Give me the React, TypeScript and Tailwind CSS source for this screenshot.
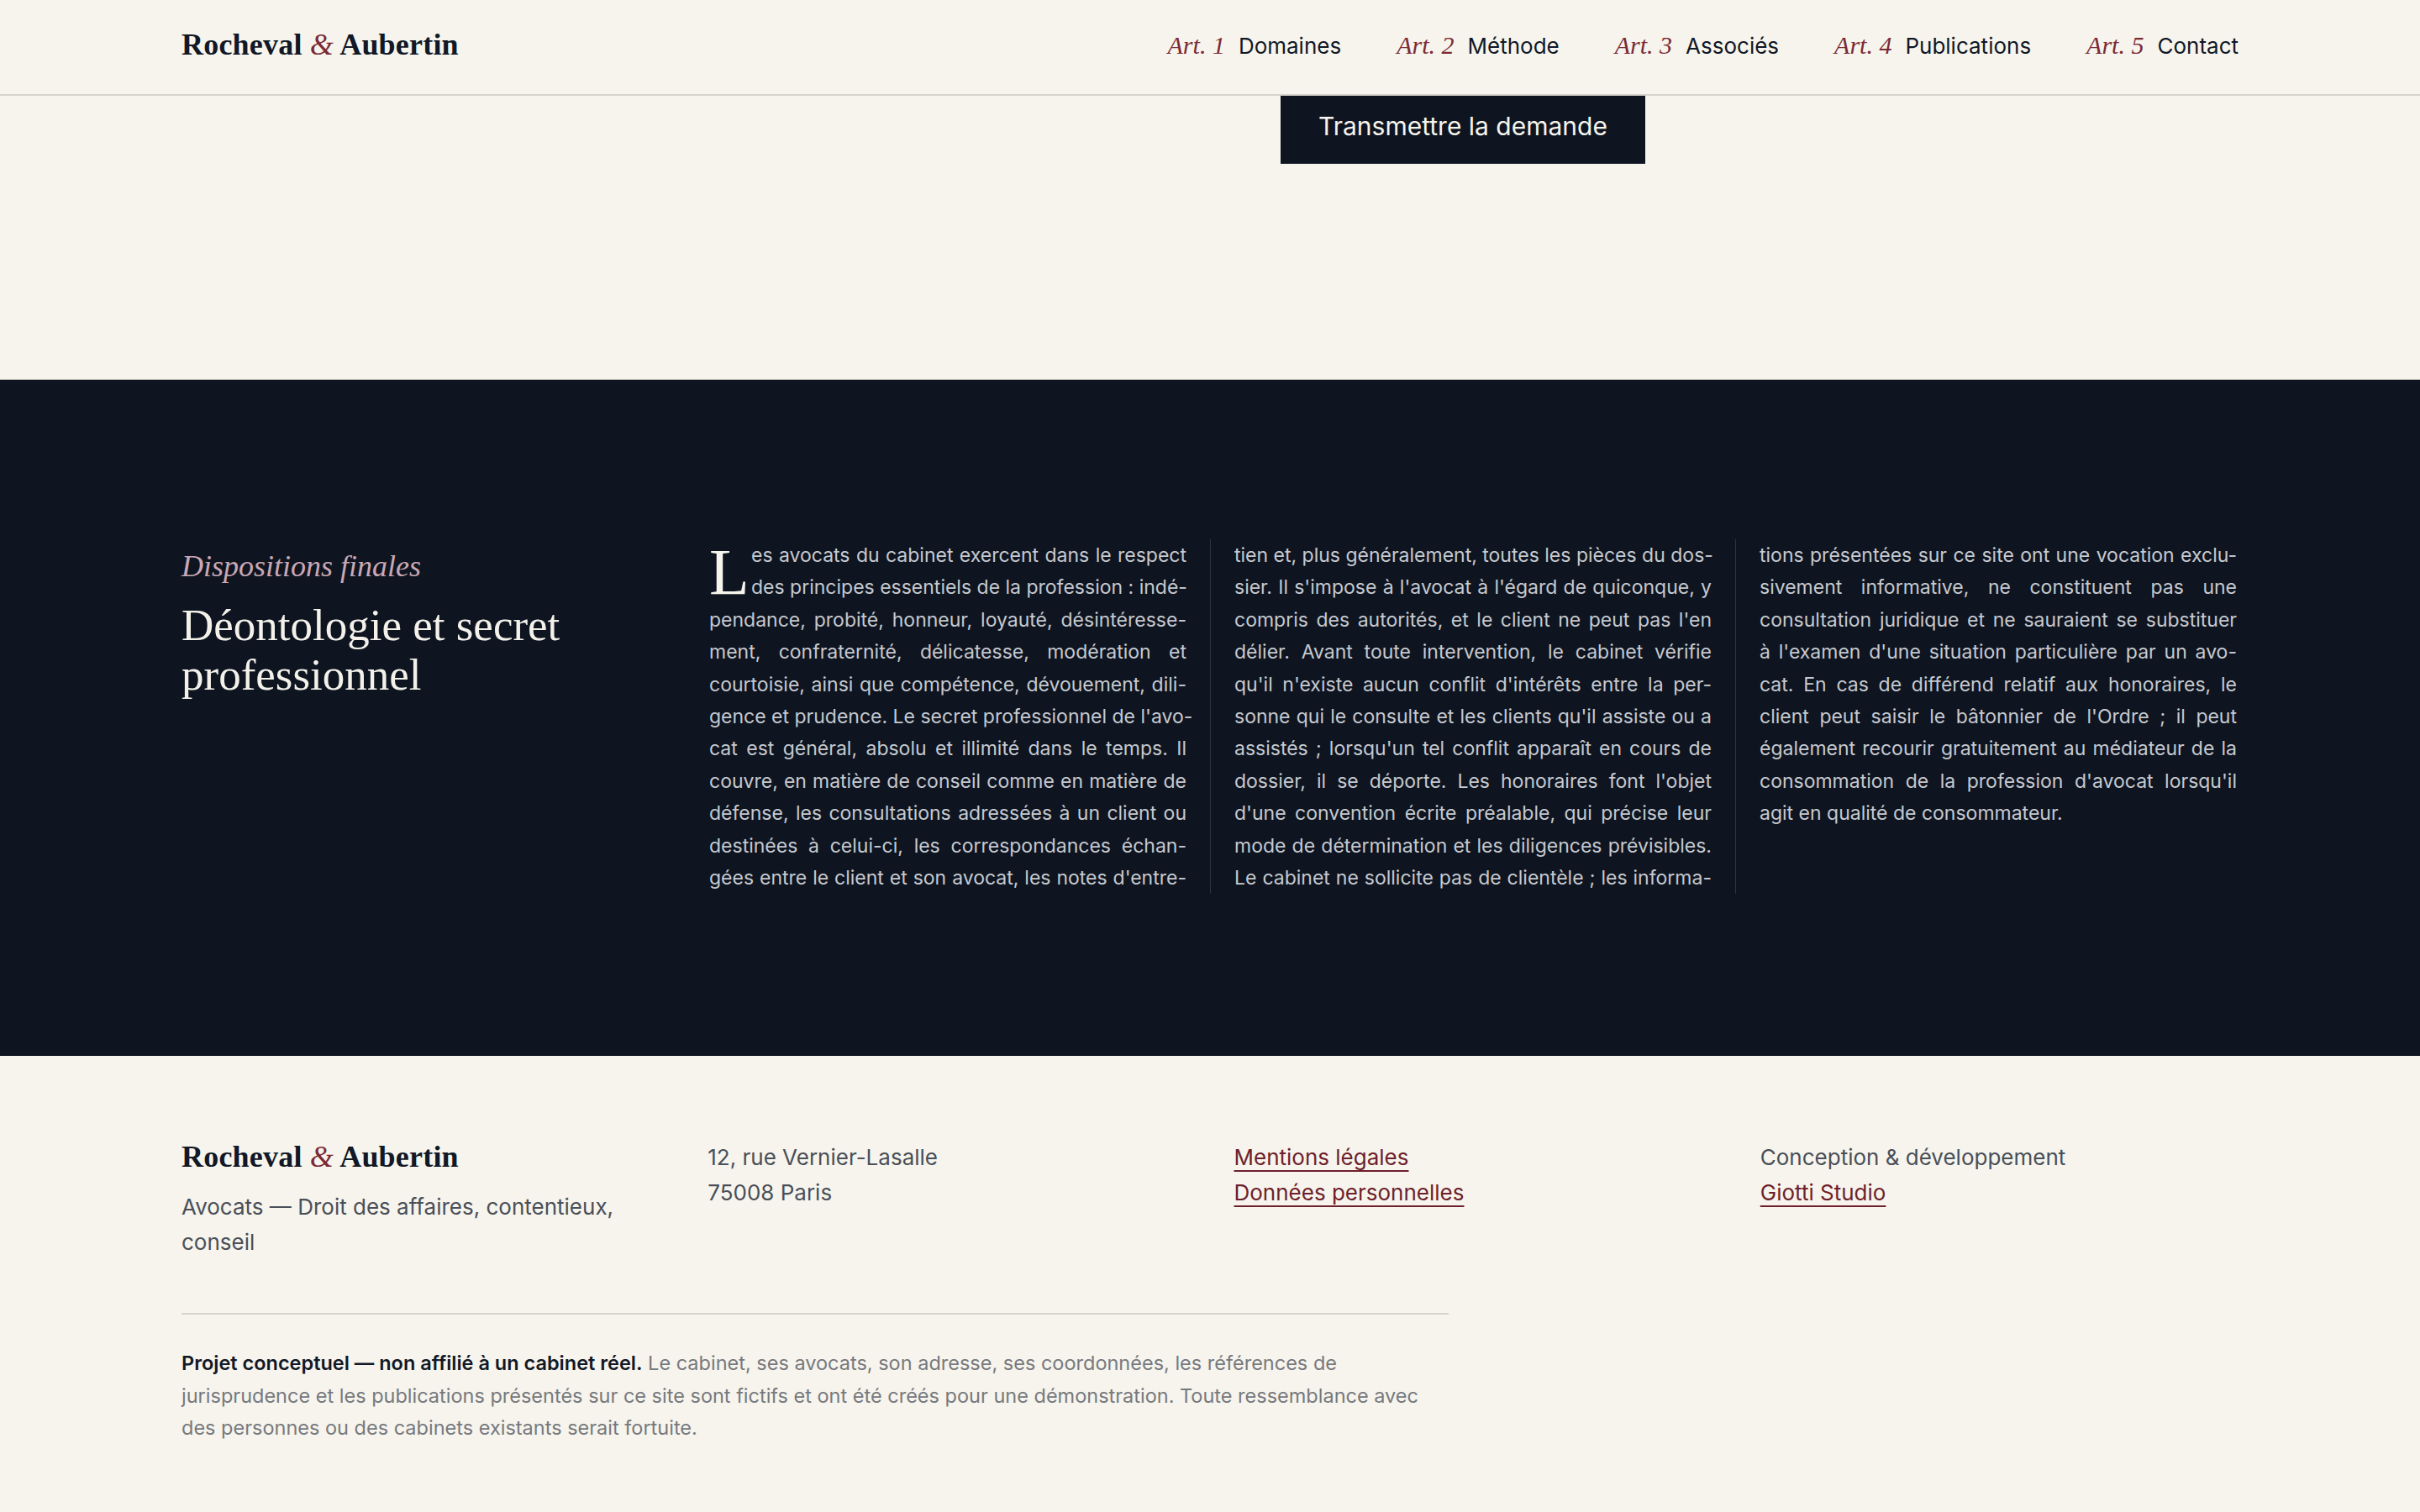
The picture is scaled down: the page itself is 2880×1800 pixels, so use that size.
import React from "react";

const serif = "font-['Liberation_Serif','Times_New_Roman',serif]";
const sans = "font-['Inter','Liberation_Sans',sans-serif]";

const navItems = [
  { n: "1", label: "Domaines" },
  { n: "2", label: "Méthode" },
  { n: "3", label: "Associés" },
  { n: "4", label: "Publications" },
  { n: "5", label: "Contact" },
];

const col1 = [
  "es avocats du cabinet exercent dans le respect",
  "des principes essentiels de la profession : indé-",
  "pendance, probité, honneur, loyauté, désintéresse-",
  "ment, confraternité, délicatesse, modération et",
  "courtoisie, ainsi que compétence, dévouement, dili-",
  "gence et prudence. Le secret professionnel de l'avo-",
  "cat est général, absolu et illimité dans le temps. Il",
  "couvre, en matière de conseil comme en matière de",
  "défense, les consultations adressées à un client ou",
  "destinées à celui-ci, les correspondances échan-",
  "gées entre le client et son avocat, les notes d'entre-",
];

const col2 = [
  "tien et, plus généralement, toutes les pièces du dos-",
  "sier. Il s'impose à l'avocat à l'égard de quiconque, y",
  "compris des autorités, et le client ne peut pas l'en",
  "délier. Avant toute intervention, le cabinet vérifie",
  "qu'il n'existe aucun conflit d'intérêts entre la per-",
  "sonne qui le consulte et les clients qu'il assiste ou a",
  "assistés ; lorsqu'un tel conflit apparaît en cours de",
  "dossier, il se déporte. Les honoraires font l'objet",
  "d'une convention écrite préalable, qui précise leur",
  "mode de détermination et les diligences prévisibles.",
  "Le cabinet ne sollicite pas de clientèle ; les informa-",
];

const col3 = [
  "tions présentées sur ce site ont une vocation exclu-",
  "sivement informative, ne constituent pas une",
  "consultation juridique et ne sauraient se substituer",
  "à l'examen d'une situation particulière par un avo-",
  "cat. En cas de différend relatif aux honoraires, le",
  "client peut saisir le bâtonnier de l'Ordre ; il peut",
  "également recourir gratuitement au médiateur de la",
  "consommation de la profession d'avocat lorsqu'il",
];

function Line({ text }: { text: string }) {
  return (
    <div className="whitespace-nowrap text-justify [text-align-last:justify]">{text}</div>
  );
}

function Logo() {
  return (
    <div className={`${serif} text-[36px] leading-[40px] font-bold text-[#111827] tracking-[0.2px]`}>
      Rocheval <span className="italic font-normal text-[#7b2a35]">&amp;</span> Aubertin
    </div>
  );
}

export default function App() {
  return (
    <div className={`${sans} bg-[#f6f4ec] min-h-screen text-[#111827]`}>
      {/* Header */}
      <header className="h-[114px] border-b-[2px] border-[#d6d3cb] bg-[#f6f4ec]">
        <div className="w-[2448px] mx-auto h-full flex items-center justify-between pb-[6px]">
          <Logo />
          <nav className="flex items-center gap-[66px]">
            {navItems.map((it) => (
              <a key={it.n} className="flex items-baseline gap-[16px]">
                <span className={`${serif} italic text-[30px] text-[#7b2a35]`}>Art. {it.n}</span>
                <span className="text-[26px] text-[#111827]">{it.label}</span>
              </a>
            ))}
          </nav>
        </div>
      </header>

      {/* Form tail */}
      <section className="h-[338px]">
        <div className="w-[2448px] mx-auto">
          <div className="pl-[1308px]">
            <button className="h-[81px] w-[434px] bg-[#0e1521] text-[#f6f4ec] text-[30px] leading-[36px] pb-[10px]">
              Transmettre la demande
            </button>
          </div>
        </div>
      </section>

      {/* Dark section */}
      <section className="bg-[#0e1521] pt-[190px] pb-[193px]">
        <div className="w-[2448px] mx-auto flex">
          <div className="w-[628px] shrink-0 pt-[10px]">
            <div className={`${serif} italic text-[36px] leading-[44px] text-[#c9a8b5]`}>
              Dispositions finales
            </div>
            <h2 className={`${serif} mt-[19px] text-[53px] leading-[59px] text-[#f3f1ea] font-normal`}>
              Déontologie et secret
              <br />
              professionnel
            </h2>
          </div>
          <div className="flex text-[23px] leading-[38.4px] text-[#c6c9cf]">
            <div className="w-[568px]">
              <span
                className={`${serif} float-left h-[76px] text-[78px] leading-[77px] text-[#f6f4ec] mr-[10px] w-[40px]`}
              >
                L
              </span>
              {col1.map((t, i) => (
                <Line key={i} text={t} />
              ))}
            </div>
            <div className="w-[597px] ml-[28px] pl-[28px] border-l border-[#2c3442]">
              {col2.map((t, i) => (
                <Line key={i} text={t} />
              ))}
            </div>
            <div className="w-[597px] ml-[28px] pl-[28px] border-l border-[#2c3442]">
              {col3.map((t, i) => (
                <Line key={i} text={t} />
              ))}
              <div className="whitespace-nowrap">agit en qualité de consommateur.</div>
            </div>
          </div>
        </div>
      </section>

      {/* Footer */}
      <footer className="pt-[100px] pb-[82px]">
        <div className="w-[2448px] mx-auto">
          <div className="grid grid-cols-4 gap-x-[57px] text-[26px] leading-[42px] text-[#4a4f58]">
            <div>
              <Logo />
              <p className="mt-[19px]">Avocats — Droit des affaires, contentieux, conseil</p>
            </div>
            <div>
              <p>12, rue Vernier-Lasalle</p>
              <p>75008 Paris</p>
            </div>
            <div className="flex flex-col items-start">
              <a className="text-[#6e1f2b] underline decoration-[2px] underline-offset-[6px]">Mentions légales</a>
              <a className="text-[#6e1f2b] underline decoration-[2px] underline-offset-[6px]">Données personnelles</a>
            </div>
            <div className="flex flex-col items-start">
              <p>Conception &amp; développement</p>
              <a className="text-[#6e1f2b] underline decoration-[2px] underline-offset-[6px]">Giotti Studio</a>
            </div>
          </div>
          <div className="mt-[63px] w-[1508px] border-t-[2px] border-[#d6d3cb] pt-[39px] text-[23.5px] leading-[38.5px] text-[#76797e]">
            <strong className="font-semibold text-[#111827]">Projet conceptuel — non affilié à un cabinet réel.</strong>{" "}
            Le cabinet, ses avocats, son adresse, ses coordonnées, les références de jurisprudence et les publications
            présentés sur ce site sont fictifs et ont été créés pour une démonstration. Toute ressemblance avec des
            personnes ou des cabinets existants serait fortuite.
          </div>
        </div>
      </footer>
    </div>
  );
}
